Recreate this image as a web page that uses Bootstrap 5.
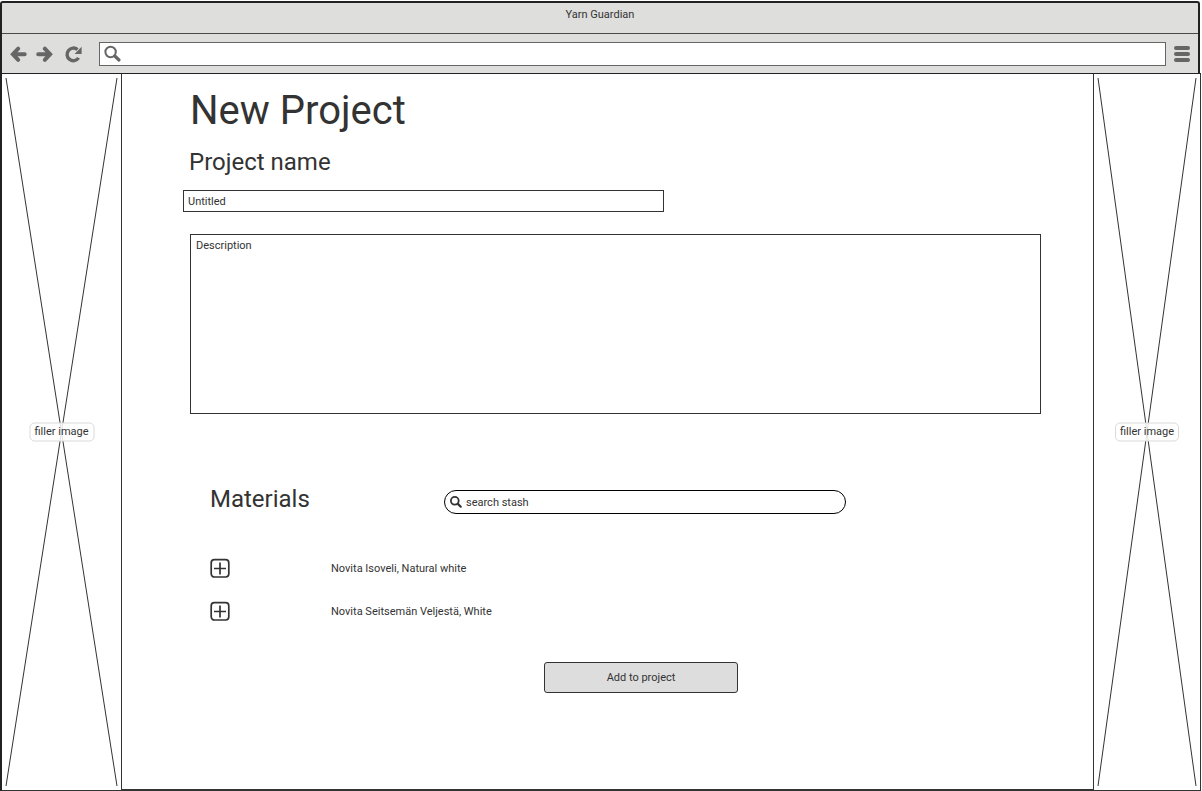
<!DOCTYPE html>
<html lang="en">
<head>
<meta charset="utf-8">
<meta name="viewport" content="width=device-width, initial-scale=1">
<title>Yarn Guardian</title>
<link href="https://cdn.jsdelivr.net/npm/bootstrap@5.3.0/dist/css/bootstrap.min.css" rel="stylesheet">
<style>
  :root { --ink: #333; --edge: #222; --chrome: #dededd; --icon: #666; }
  body { font-family: Roboto, "Liberation Sans", sans-serif; font-size: 11px; line-height: 14px; color: var(--ink); background: #fff; height: 791px; overflow: hidden; }
  .window { width: 1201px; height: 791px; padding-top: 1px; }
  .chrome { width: 1200px; height: 72px; background: var(--chrome); border: 2px solid var(--edge); border-bottom: 0; border-radius: 3px 3px 0 0; }
  .titlebar { height: 31px; padding-top: 5px; border-bottom: 1px solid #4a4a4a; }
  .toolbar { height: 39px; padding: 0 8px 0 8px; }
  .address { height: 24px; margin-left: 16px; margin-right: 8px; border: 1px solid var(--icon); background: #fff; }
  .address input { font-size: 11px; outline: 0; }
  .viewport { border-top: 1px solid var(--edge); }
  .filler { border-bottom: 1px solid var(--ink); border-right: 1px solid var(--ink); }
  .filler-left { width: 122px; border-left: 2px solid var(--edge); }
  .filler-right { width: 108px; border-left: 1px solid var(--ink); }
  .filler-tag { height: 19px; width: 64px; line-height: 16px; border: 1px solid #d9d9d9; border-radius: 5px; background: rgba(255,255,255,.85); }
  .filler-left .filler-tag { width: 65px; }
  .page { padding: 13px 52px 0 67px; border-bottom: 2px solid var(--ink); }
  h1 { font-size: 40px; line-height: 48px; font-weight: 400; padding-left: 1px; }
  h2 { font-size: 24px; line-height: 28px; font-weight: 400; }
  .label-name { margin-top: 13px; }
  .box { border: 1px solid var(--ink); border-radius: 0; font-size: 11px; line-height: 14px; color: var(--ink); background: #fff; outline: 0; }
  .name-box { width: 481px; height: 22px; margin: 14px 0 22px -6px; padding: 0 4px; }
  .desc-box { width: 851px; height: 180px; margin-left: 1px; padding: 4px 5px; resize: none; }
  .materials { margin-top: 71px; padding-left: 21px; }
  .materials h2 { width: 234px; }
  .search { width: 402px; height: 24px; margin-top: 5px; padding-left: 5px; border: 1px solid #000; border-radius: 12px; gap: 4px; }
  .search input { font-size: 11px; color: var(--ink); outline: 0; padding: 1px 0 0; }
  .search input::placeholder { color: var(--ink); opacity: 1; }
  .stash { margin: 44px 0 0 21px; gap: 23px; }
  .stash li { height: 20px; gap: 101px; }
  .stash span { padding-top: 2px; }
  .add-btn { width: 194px; height: 31px; margin: 41px 0 0 355px; padding: 0; font-size: 11px; line-height: 14px; border: 1px solid var(--ink); border-radius: 3px; background: #ddd; color: var(--ink); }
</style>
</head>
<body>
<div class="window d-flex flex-column">
  <header class="chrome flex-shrink-0">
    <div class="titlebar text-center">Yarn Guardian</div>
    <div class="toolbar d-flex align-items-center">
      <svg class="flex-shrink-0" width="73" height="20" viewBox="0 0 73 20" fill="none" stroke="#666" stroke-width="4" stroke-linecap="round" stroke-linejoin="miter">
        <path d="M14.7 10.2H3.8M8.2 4.6L2.9 10.2L8.2 15.8"/>
        <path d="M28.2 10.2H39.2M34.8 4.6L40.1 10.2L34.8 15.8"/>
        <path d="M68.6 13.9A6.3 6.3 0 1 1 67.5 5.6" stroke-width="3.4" stroke-linecap="butt"/>
        <path d="M71.6 2.8v7.2h-7z" fill="#666" stroke="none"/>
      </svg>
      <div class="address flex-grow-1 d-flex align-items-center">
        <svg class="flex-shrink-0" width="24" height="22" viewBox="0 0 24 22" fill="none" stroke="#666">
          <circle cx="10.6" cy="9" r="5.2" stroke-width="2"/>
          <path d="M14.8 13L19 17" stroke-width="3.2" stroke-linecap="round"/>
        </svg>
        <input class="border-0 p-0 flex-grow-1 bg-transparent" type="text" aria-label="Address">
      </div>
      <svg class="flex-shrink-0" width="16" height="18" viewBox="0 0 16 18" fill="#666">
        <rect y="1" width="16" height="4" rx="2"/><rect y="7" width="16" height="4" rx="2"/><rect y="13" width="16" height="4" rx="2"/>
      </svg>
    </div>
  </header>
  <div class="viewport d-flex flex-grow-1">
    <aside class="filler filler-left flex-shrink-0 position-relative">
      <svg class="d-block" width="119" height="716" viewBox="0 0 119 716" stroke="#333" stroke-width="1"><path d="M4 4L115 712M115 4L4 712"/></svg>
      <div class="filler-tag text-center text-nowrap position-absolute top-50 start-50 translate-middle">filler image</div>
    </aside>
    <main class="page flex-grow-1">
      <h1 class="mb-0">New Project</h1>
      <h2 class="mb-0 label-name">Project name</h2>
      <input class="box name-box d-block" type="text" value="Untitled" aria-label="Project name">
      <textarea class="box desc-box d-block" aria-label="Description">Description</textarea>
      <section class="materials d-flex align-items-start">
        <h2 class="mb-0">Materials</h2>
        <div class="search d-flex align-items-center">
          <svg class="flex-shrink-0" width="12" height="12" viewBox="0 0 12 12" fill="none" stroke="#333">
            <circle cx="4.8" cy="4.8" r="3.9" stroke-width="1.8"/><path d="M7.9 7.9L10.7 10.7" stroke-width="2.2" stroke-linecap="round"/>
          </svg>
          <input class="border-0 flex-grow-1 bg-transparent" type="text" placeholder="search stash" aria-label="Search stash">
        </div>
      </section>
      <ul class="stash list-unstyled d-flex flex-column">
        <li class="d-flex align-items-center">
          <svg class="flex-shrink-0" width="20" height="20" viewBox="0 0 20 20" fill="none" stroke="#333" stroke-width="1.7"><rect x="1.2" y="1.7" width="17.6" height="17.3" rx="3.2"/><path d="M4 10.5H16M10 4.6V16.4"/></svg>
          <span>Novita Isoveli, Natural white</span>
        </li>
        <li class="d-flex align-items-center">
          <svg class="flex-shrink-0" width="20" height="20" viewBox="0 0 20 20" fill="none" stroke="#333" stroke-width="1.7"><rect x="1.2" y="1.7" width="17.6" height="17.3" rx="3.2"/><path d="M4 10.5H16M10 4.6V16.4"/></svg>
          <span>Novita Seitsemän Veljestä, White</span>
        </li>
      </ul>
      <button class="btn add-btn d-block" type="button">Add to project</button>
    </main>
    <aside class="filler filler-right flex-shrink-0 position-relative">
      <svg class="d-block" width="106" height="716" viewBox="0 0 106 716" stroke="#333" stroke-width="1"><path d="M4 4L102 712M102 4L4 712"/></svg>
      <div class="filler-tag text-center text-nowrap position-absolute top-50 start-50 translate-middle">filler image</div>
    </aside>
  </div>
</div>
<script src="https://cdn.jsdelivr.net/npm/bootstrap@5.3.0/dist/js/bootstrap.bundle.min.js"></script>
</body>
</html>
